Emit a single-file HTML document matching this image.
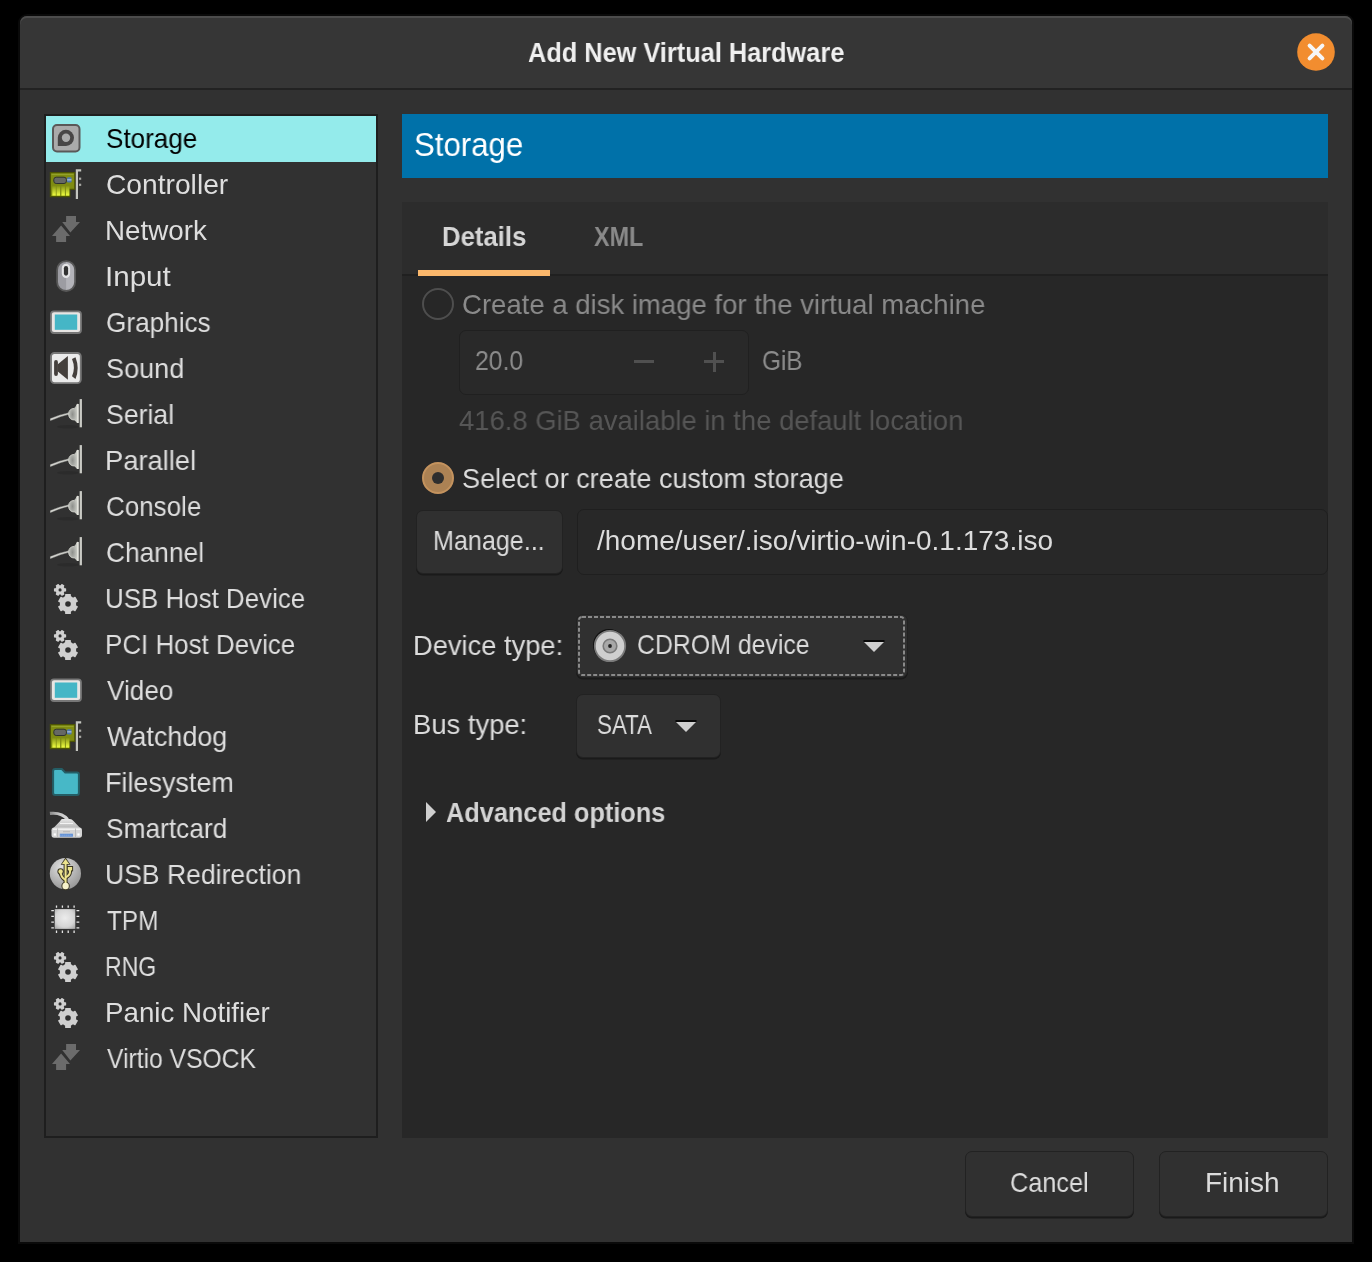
<!DOCTYPE html>
<html><head><meta charset="utf-8">
<style>
*{box-sizing:border-box;margin:0;padding:0}
html,body{width:1372px;height:1262px;background:#000;overflow:hidden}
body{position:relative;font-family:"Liberation Sans",sans-serif;font-size:27.6px;color:#dcdcdc}
.a{position:absolute}
.t{position:absolute;white-space:pre;line-height:1;transform-origin:0 0;will-change:transform}
.btn{position:absolute;background:#303030;border:1.5px solid #222;border-radius:7px;box-shadow:0 1.5px 0 #1a1a1a}
.ent{position:absolute;background:#282828;border:1.5px solid #1f1f1f;border-radius:7px}
</style></head><body>
<div class="a" style="left:18px;top:14px;width:1336px;height:1230px;background:#0a0a0a;border-radius:9px 9px 0 0"></div>
<div class="a" style="left:20px;top:16px;width:1332px;height:72px;background:#363636;border-radius:7px 7px 0 0;box-shadow:inset 0 2px 0 #4c4c4c"></div>
<div class="a" style="left:20px;top:88px;width:1332px;height:2px;background:#222"></div>
<div class="a" style="left:20px;top:90px;width:1332px;height:1152px;background:#313131"></div>

<div class="t" style="left:528.00px;top:39.43px;font-size:27.6px;font-weight:bold;color:#f0f0f0;transform:scaleX(0.9182)">Add New Virtual Hardware</div>
<svg class="a" style="left:1296px;top:32px" width="40" height="40" viewBox="0 0 40 40"><circle cx="20" cy="20" r="18.8" fill="#f28d2f"/><path d="M13.6 13.6 L26.4 26.4 M26.4 13.6 L13.6 26.4" stroke="#f6f6f6" stroke-width="4" stroke-linecap="round"/></svg>
<div class="a" style="left:44px;top:114px;width:334px;height:1024px;border:2px solid #1e1e1e;background:#313131"></div>
<div class="a" style="left:46px;top:116px;width:330px;height:46px;background:#94ebeb"></div>
<svg class="a" style="left:48px;top:116px" width="36" height="46" viewBox="0 0 36 46"><rect x="5" y="9" width="26.5" height="26.5" rx="4" fill="#aaa" stroke="#5a5858" stroke-width="2"/>
<path d="M9.8 30 L9.8 21.8 A8.1 8.1 0 1 1 18 30 Z" fill="#484646"/>
<circle cx="18" cy="21.8" r="4.2" fill="#aaa"/></svg>
<div class="t" style="left:106.06px;top:124.53px;font-size:27.6px;color:#000;transform:scaleX(0.9444)">Storage</div>
<svg class="a" style="left:48px;top:162px" width="36" height="46" viewBox="0 0 36 46"><defs><linearGradient id="fg" x1="0" y1="0" x2="0" y2="1"><stop offset="0" stop-color="#8a9818"/><stop offset="1" stop-color="#f0ff40"/></linearGradient></defs>
<path d="M2.4 10.6 H26.8 V27.4 H21.8 V34.6 H2.4 Z" fill="#7f8c12" stroke="#4c5404" stroke-width="1.2"/>
<path d="M3.6 11.8 H25.6 V13 H3.6Z" fill="#98a830" opacity="0.8"/>
<rect x="4.3" y="24.2" width="3.5" height="9.4" fill="url(#fg)"/><rect x="8.6" y="24.2" width="3.5" height="9.4" fill="url(#fg)"/><rect x="13.4" y="24.2" width="3.5" height="9.4" fill="url(#fg)"/><rect x="17.9" y="24.2" width="3.5" height="9.4" fill="url(#fg)"/>
<rect x="5.8" y="15.2" width="12.6" height="6.3" rx="2.4" fill="#666864" stroke="#2e3230" stroke-width="1"/>
<rect x="19" y="15.2" width="4.6" height="5.2" rx="1.2" fill="#4f79b0"/><path d="M19.2 17.9 H23.5" stroke="#d8e0ea" stroke-width="0.9"/>
<path d="M28.9 36.9 V8.3 H33.2" stroke="#c4c6c0" stroke-width="2.2" fill="none"/>
<rect x="31" y="15.6" width="2.2" height="2.2" fill="#a8a8a4"/><rect x="31" y="21.7" width="2.2" height="2.2" fill="#a8a8a4"/></svg>
<div class="t" style="left:105.98px;top:170.53px;font-size:27.6px;color:#dedede;transform:scaleX(1.0217)">Controller</div>
<svg class="a" style="left:48px;top:208px" width="36" height="46" viewBox="0 0 36 46"><path d="M18.1 8 H28 V14.1 H32 L22.4 24.6 L14.2 14.1 H18.1 Z" fill="#6b6b6b"/>
<path d="M13.1 17.4 L22 28 H18.1 V34.1 H8.1 V28 H4 Z" fill="#6b6b6b"/></svg>
<div class="t" style="left:104.99px;top:216.53px;font-size:27.6px;color:#dedede;transform:scaleX(1.0060)">Network</div>
<svg class="a" style="left:48px;top:254px" width="36" height="46" viewBox="0 0 36 46"><rect x="9.1" y="7.1" width="18" height="29.9" rx="9" fill="#b3b3b9"/>
<path d="M18.1 7.1 V37 A9 9 0 0 1 9.1 28 V16.1 A9 9 0 0 1 18.1 7.1Z" fill="#9c9ca2"/>
<rect x="9.1" y="7.1" width="18" height="29.9" rx="9" fill="none" stroke="#585858" stroke-width="1.8"/>
<rect x="13.8" y="9.8" width="8.3" height="14.2" rx="4.15" fill="#e4e4e6"/>
<rect x="15.9" y="12.1" width="4.2" height="9.6" rx="2.1" fill="#323232"/></svg>
<div class="t" style="left:104.86px;top:262.53px;font-size:27.6px;color:#dedede;transform:scaleX(1.0719)">Input</div>
<svg class="a" style="left:48px;top:300px" width="36" height="46" viewBox="0 0 36 46"><rect x="3" y="11.3" width="30" height="21.7" rx="3" fill="#e8e6e4" stroke="#777" stroke-width="1.8"/>
<rect x="6.8" y="14.5" width="22.4" height="15.3" fill="#45b6c6"/></svg>
<div class="t" style="left:106.05px;top:308.53px;font-size:27.6px;color:#dedede;transform:scaleX(0.9483)">Graphics</div>
<svg class="a" style="left:48px;top:346px" width="36" height="46" viewBox="0 0 36 46"><rect x="3" y="7" width="29.8" height="30.1" rx="3.5" fill="#ebebeb" stroke="#777" stroke-width="1.9"/>
<rect x="6.1" y="14" width="3.8" height="15.9" rx="1.9" fill="#443f3c"/>
<path d="M9.5 18.4 L19.9 9.9 V33.7 L9.5 25.3Z" fill="#443f3c"/>
<path d="M24 13.1 Q27.8 22.3 24 30.2 L27.5 32.9 Q31.9 22.3 27.5 11.2 Z" fill="#443f3c"/></svg>
<div class="t" style="left:106.02px;top:354.53px;font-size:27.6px;color:#dedede;transform:scaleX(0.9814)">Sound</div>
<svg class="a" style="left:48px;top:392px" width="36" height="46" viewBox="0 0 36 46"><defs><radialGradient id="bg" cx="0.45" cy="0.55" r="0.6"><stop offset="0" stop-color="#8e908c"/><stop offset="1" stop-color="#d0d2cc"/></radialGradient></defs>
<ellipse cx="20" cy="34.8" rx="11" ry="1.8" fill="#000" opacity="0.12"/>
<path d="M2 26.4 Q12 22.5 20.8 20.6 L21 22.4 Q12 24.5 2.1 29 Z" fill="#d2d3ce" stroke="#3a3a3a" stroke-width="0.4"/>
<path d="M20.5 22 Q21 16.4 26.5 16.4 Q28 15 29.4 11.9 V30.9 Q28 28.6 26.5 28 Q21 28 20.5 22Z" fill="url(#bg)" stroke="#cfd0ca" stroke-width="0.9"/>
<path d="M29.9 11.9 V30.9" stroke="#e2e3dc" stroke-width="1.8"/>
<path d="M32.8 7.1 V35.3" stroke="#c9cac4" stroke-width="2.3"/></svg>
<div class="t" style="left:106.04px;top:400.53px;font-size:27.6px;color:#dedede;transform:scaleX(0.9647)">Serial</div>
<svg class="a" style="left:48px;top:438px" width="36" height="46" viewBox="0 0 36 46"><defs><radialGradient id="bg" cx="0.45" cy="0.55" r="0.6"><stop offset="0" stop-color="#8e908c"/><stop offset="1" stop-color="#d0d2cc"/></radialGradient></defs>
<ellipse cx="20" cy="34.8" rx="11" ry="1.8" fill="#000" opacity="0.12"/>
<path d="M2 26.4 Q12 22.5 20.8 20.6 L21 22.4 Q12 24.5 2.1 29 Z" fill="#d2d3ce" stroke="#3a3a3a" stroke-width="0.4"/>
<path d="M20.5 22 Q21 16.4 26.5 16.4 Q28 15 29.4 11.9 V30.9 Q28 28.6 26.5 28 Q21 28 20.5 22Z" fill="url(#bg)" stroke="#cfd0ca" stroke-width="0.9"/>
<path d="M29.9 11.9 V30.9" stroke="#e2e3dc" stroke-width="1.8"/>
<path d="M32.8 7.1 V35.3" stroke="#c9cac4" stroke-width="2.3"/></svg>
<div class="t" style="left:105.02px;top:446.53px;font-size:27.6px;color:#dedede;transform:scaleX(0.9899)">Parallel</div>
<svg class="a" style="left:48px;top:484px" width="36" height="46" viewBox="0 0 36 46"><defs><radialGradient id="bg" cx="0.45" cy="0.55" r="0.6"><stop offset="0" stop-color="#8e908c"/><stop offset="1" stop-color="#d0d2cc"/></radialGradient></defs>
<ellipse cx="20" cy="34.8" rx="11" ry="1.8" fill="#000" opacity="0.12"/>
<path d="M2 26.4 Q12 22.5 20.8 20.6 L21 22.4 Q12 24.5 2.1 29 Z" fill="#d2d3ce" stroke="#3a3a3a" stroke-width="0.4"/>
<path d="M20.5 22 Q21 16.4 26.5 16.4 Q28 15 29.4 11.9 V30.9 Q28 28.6 26.5 28 Q21 28 20.5 22Z" fill="url(#bg)" stroke="#cfd0ca" stroke-width="0.9"/>
<path d="M29.9 11.9 V30.9" stroke="#e2e3dc" stroke-width="1.8"/>
<path d="M32.8 7.1 V35.3" stroke="#c9cac4" stroke-width="2.3"/></svg>
<div class="t" style="left:106.06px;top:492.53px;font-size:27.6px;color:#dedede;transform:scaleX(0.9410)">Console</div>
<svg class="a" style="left:48px;top:530px" width="36" height="46" viewBox="0 0 36 46"><defs><radialGradient id="bg" cx="0.45" cy="0.55" r="0.6"><stop offset="0" stop-color="#8e908c"/><stop offset="1" stop-color="#d0d2cc"/></radialGradient></defs>
<ellipse cx="20" cy="34.8" rx="11" ry="1.8" fill="#000" opacity="0.12"/>
<path d="M2 26.4 Q12 22.5 20.8 20.6 L21 22.4 Q12 24.5 2.1 29 Z" fill="#d2d3ce" stroke="#3a3a3a" stroke-width="0.4"/>
<path d="M20.5 22 Q21 16.4 26.5 16.4 Q28 15 29.4 11.9 V30.9 Q28 28.6 26.5 28 Q21 28 20.5 22Z" fill="url(#bg)" stroke="#cfd0ca" stroke-width="0.9"/>
<path d="M29.9 11.9 V30.9" stroke="#e2e3dc" stroke-width="1.8"/>
<path d="M32.8 7.1 V35.3" stroke="#c9cac4" stroke-width="2.3"/></svg>
<div class="t" style="left:106.05px;top:538.53px;font-size:27.6px;color:#dedede;transform:scaleX(0.9537)">Channel</div>
<svg class="a" style="left:48px;top:576px" width="36" height="46" viewBox="0 0 36 46"><g transform="translate(12.05 13.9)"><circle r="4.7" fill="#d0d0d0"/><rect x="-1.7" y="-6.1" width="3.4" height="6.1" rx="0.6" fill="#d0d0d0" transform="rotate(90.0)"/><rect x="-1.7" y="-6.1" width="3.4" height="6.1" rx="0.6" fill="#d0d0d0" transform="rotate(150.0)"/><rect x="-1.7" y="-6.1" width="3.4" height="6.1" rx="0.6" fill="#d0d0d0" transform="rotate(210.0)"/><rect x="-1.7" y="-6.1" width="3.4" height="6.1" rx="0.6" fill="#d0d0d0" transform="rotate(270.0)"/><rect x="-1.7" y="-6.1" width="3.4" height="6.1" rx="0.6" fill="#d0d0d0" transform="rotate(330.0)"/><rect x="-1.7" y="-6.1" width="3.4" height="6.1" rx="0.6" fill="#d0d0d0" transform="rotate(390.0)"/><circle r="1.55" fill="#303030"/></g><g transform="translate(20 28)"><circle r="8.2" fill="#d0d0d0"/><rect x="-2.9" y="-10" width="5.8" height="10" rx="0.6" fill="#d0d0d0" transform="rotate(0.0)"/><rect x="-2.9" y="-10" width="5.8" height="10" rx="0.6" fill="#d0d0d0" transform="rotate(60.0)"/><rect x="-2.9" y="-10" width="5.8" height="10" rx="0.6" fill="#d0d0d0" transform="rotate(120.0)"/><rect x="-2.9" y="-10" width="5.8" height="10" rx="0.6" fill="#d0d0d0" transform="rotate(180.0)"/><rect x="-2.9" y="-10" width="5.8" height="10" rx="0.6" fill="#d0d0d0" transform="rotate(240.0)"/><rect x="-2.9" y="-10" width="5.8" height="10" rx="0.6" fill="#d0d0d0" transform="rotate(300.0)"/><circle r="2.8" fill="#303030"/></g></svg>
<div class="t" style="left:105.12px;top:584.53px;font-size:27.6px;color:#dedede;transform:scaleX(0.9393)">USB Host Device</div>
<svg class="a" style="left:48px;top:622px" width="36" height="46" viewBox="0 0 36 46"><g transform="translate(12.05 13.9)"><circle r="4.7" fill="#d0d0d0"/><rect x="-1.7" y="-6.1" width="3.4" height="6.1" rx="0.6" fill="#d0d0d0" transform="rotate(90.0)"/><rect x="-1.7" y="-6.1" width="3.4" height="6.1" rx="0.6" fill="#d0d0d0" transform="rotate(150.0)"/><rect x="-1.7" y="-6.1" width="3.4" height="6.1" rx="0.6" fill="#d0d0d0" transform="rotate(210.0)"/><rect x="-1.7" y="-6.1" width="3.4" height="6.1" rx="0.6" fill="#d0d0d0" transform="rotate(270.0)"/><rect x="-1.7" y="-6.1" width="3.4" height="6.1" rx="0.6" fill="#d0d0d0" transform="rotate(330.0)"/><rect x="-1.7" y="-6.1" width="3.4" height="6.1" rx="0.6" fill="#d0d0d0" transform="rotate(390.0)"/><circle r="1.55" fill="#303030"/></g><g transform="translate(20 28)"><circle r="8.2" fill="#d0d0d0"/><rect x="-2.9" y="-10" width="5.8" height="10" rx="0.6" fill="#d0d0d0" transform="rotate(0.0)"/><rect x="-2.9" y="-10" width="5.8" height="10" rx="0.6" fill="#d0d0d0" transform="rotate(60.0)"/><rect x="-2.9" y="-10" width="5.8" height="10" rx="0.6" fill="#d0d0d0" transform="rotate(120.0)"/><rect x="-2.9" y="-10" width="5.8" height="10" rx="0.6" fill="#d0d0d0" transform="rotate(180.0)"/><rect x="-2.9" y="-10" width="5.8" height="10" rx="0.6" fill="#d0d0d0" transform="rotate(240.0)"/><rect x="-2.9" y="-10" width="5.8" height="10" rx="0.6" fill="#d0d0d0" transform="rotate(300.0)"/><circle r="2.8" fill="#303030"/></g></svg>
<div class="t" style="left:105.12px;top:630.53px;font-size:27.6px;color:#dedede;transform:scaleX(0.9397)">PCI Host Device</div>
<svg class="a" style="left:48px;top:668px" width="36" height="46" viewBox="0 0 36 46"><rect x="3" y="11.3" width="30" height="21.7" rx="3" fill="#e8e6e4" stroke="#777" stroke-width="1.8"/>
<rect x="6.8" y="14.5" width="22.4" height="15.3" fill="#45b6c6"/></svg>
<div class="t" style="left:107.00px;top:676.53px;font-size:27.6px;color:#dedede;transform:scaleX(0.9465)">Video</div>
<svg class="a" style="left:48px;top:714px" width="36" height="46" viewBox="0 0 36 46"><defs><linearGradient id="fg" x1="0" y1="0" x2="0" y2="1"><stop offset="0" stop-color="#8a9818"/><stop offset="1" stop-color="#f0ff40"/></linearGradient></defs>
<path d="M2.4 10.6 H26.8 V27.4 H21.8 V34.6 H2.4 Z" fill="#7f8c12" stroke="#4c5404" stroke-width="1.2"/>
<path d="M3.6 11.8 H25.6 V13 H3.6Z" fill="#98a830" opacity="0.8"/>
<rect x="4.3" y="24.2" width="3.5" height="9.4" fill="url(#fg)"/><rect x="8.6" y="24.2" width="3.5" height="9.4" fill="url(#fg)"/><rect x="13.4" y="24.2" width="3.5" height="9.4" fill="url(#fg)"/><rect x="17.9" y="24.2" width="3.5" height="9.4" fill="url(#fg)"/>
<rect x="5.8" y="15.2" width="12.6" height="6.3" rx="2.4" fill="#666864" stroke="#2e3230" stroke-width="1"/>
<rect x="19" y="15.2" width="4.6" height="5.2" rx="1.2" fill="#4f79b0"/><path d="M19.2 17.9 H23.5" stroke="#d8e0ea" stroke-width="0.9"/>
<path d="M28.9 36.9 V8.3 H33.2" stroke="#c4c6c0" stroke-width="2.2" fill="none"/>
<rect x="31" y="15.6" width="2.2" height="2.2" fill="#a8a8a4"/><rect x="31" y="21.7" width="2.2" height="2.2" fill="#a8a8a4"/></svg>
<div class="t" style="left:107.00px;top:722.53px;font-size:27.6px;color:#dedede;transform:scaleX(0.9765)">Watchdog</div>
<svg class="a" style="left:48px;top:760px" width="36" height="46" viewBox="0 0 36 46"><path d="M5.1 11.1 Q5.1 9.1 7.1 9.1 H13.8 L17.2 12.4 H28.9 Q30.9 12.4 30.9 14.4 V32.9 Q30.9 34.9 28.9 34.9 H7.1 Q5.1 34.9 5.1 32.9 Z" fill="#47b8c7" stroke="#245e66" stroke-width="2"/></svg>
<div class="t" style="left:105.04px;top:768.53px;font-size:27.6px;color:#dedede;transform:scaleX(0.9778)">Filesystem</div>
<svg class="a" style="left:48px;top:806px" width="36" height="46" viewBox="0 0 36 46"><defs><linearGradient id="scg" x1="0" y1="0" x2="0" y2="1"><stop offset="0" stop-color="#e6e6e6"/><stop offset="1" stop-color="#b4b4b4"/></linearGradient>
<linearGradient id="scc" x1="0" y1="0" x2="1" y2="0"><stop offset="0" stop-color="#8a8a8a"/><stop offset="0.5" stop-color="#c4c4c4"/><stop offset="1" stop-color="#d8d8d8"/></linearGradient></defs>
<path d="M1.9 7.4 Q14 6.2 19.6 13.5" stroke="url(#scc)" stroke-width="3.2" fill="none"/>
<path d="M14.2 13 H21.8 Q24 13 25.5 15 L32.6 22.6 H5 L12.2 15 Q13 13 14.2 13Z" fill="url(#scg)"/>
<path d="M12 17.5 H25" stroke="#f2f2f2" stroke-width="1"/>
<rect x="3.5" y="21.6" width="30.5" height="10.1" rx="2.6" fill="#d6d6d6"/>
<path d="M5 23.2 H32.5" stroke="#f6f6f6" stroke-width="1.3"/>
<path d="M15 25.6 H22" stroke="#bdbdbd" stroke-width="1.4"/>
<rect x="11.8" y="27.7" width="13.1" height="3" fill="#5e8ed4"/>
<path d="M12.4 29.2 H24.4" stroke="#b0cbf0" stroke-width="0.8" stroke-dasharray="1 1"/>
<rect x="5.7" y="27.4" width="2.2" height="2.2" fill="#fff"/><rect x="29.4" y="27.4" width="2.2" height="2.2" fill="#fff"/>
<path d="M9.6 22.5 V31 M27.5 22.5 V31" stroke="#b0b0b0" stroke-width="0.8"/></svg>
<div class="t" style="left:106.05px;top:814.53px;font-size:27.6px;color:#dedede;transform:scaleX(0.9526)">Smartcard</div>
<svg class="a" style="left:48px;top:852px" width="36" height="46" viewBox="0 0 36 46"><defs><radialGradient id="ug" cx="0.4" cy="0.3" r="0.85"><stop offset="0" stop-color="#e2e2e2"/><stop offset="0.7" stop-color="#a4a4a4"/><stop offset="1" stop-color="#8a8a8a"/></radialGradient></defs>
<circle cx="17.4" cy="21.6" r="15.6" fill="url(#ug)"/>
<g stroke="#3a3622" stroke-width="4" fill="none" stroke-linejoin="round"><path d="M17.6 11 V32"/><path d="M22 17 V20 Q22 23 17.6 25.5"/><path d="M12.6 19.4 Q12.6 25 17.6 28"/></g>
<g fill="#3a3622"><circle cx="12.6" cy="19.4" r="3.2"/><rect x="18.8" y="14" width="6.3" height="5.4"/><path d="M17.6 5.6 L22.6 12.8 H12.6Z"/><circle cx="17.6" cy="34" r="4.2"/></g>
<g stroke="#ece48e" stroke-width="2" fill="none"><path d="M17.6 11 V32"/><path d="M22 17 V20 Q22 23 17.6 25.5"/><path d="M12.6 19.4 Q12.6 25 17.6 28"/></g>
<g fill="#ece48e"><circle cx="12.6" cy="19.4" r="2.2"/><rect x="19.8" y="15" width="4.3" height="3.4"/><path d="M17.6 7 L21.2 12 H14Z"/><circle cx="17.6" cy="34" r="3.2" fill="#f6f2cc"/></g></svg>
<div class="t" style="left:105.08px;top:860.53px;font-size:27.6px;color:#dedede;transform:scaleX(0.9620)">USB Redirection</div>
<svg class="a" style="left:48px;top:898px" width="36" height="46" viewBox="0 0 36 46"><defs><radialGradient id="cg" cx="0.5" cy="0.45" r="0.75"><stop offset="0" stop-color="#ececec"/><stop offset="0.6" stop-color="#d6d6d6"/><stop offset="1" stop-color="#a0a0a0"/></radialGradient></defs>
<rect x="6.7" y="11.1" width="20.6" height="19.8" fill="url(#cg)"/>
<path d="M8.5 7.4v2.4M14.4 7.4v2.4M20.2 7.4v2.4M26.1 7.4v2.4M8.5 32.4v2.5M14.4 32.4v2.5M20.2 32.4v2.5M26.1 32.4v2.5M3.3 12.7h2.6M3.3 18.4h2.6M3.3 24.2h2.6M3.3 29.9h2.6M28.5 12.7h2.8M28.5 18.4h2.8M28.5 24.2h2.8M28.5 29.9h2.8" stroke="#e6e6e6" stroke-width="1.3"/></svg>
<div class="t" style="left:107.00px;top:906.53px;font-size:27.6px;color:#dedede;transform:scaleX(0.8834)">TPM</div>
<svg class="a" style="left:48px;top:944px" width="36" height="46" viewBox="0 0 36 46"><g transform="translate(12.05 13.9)"><circle r="4.7" fill="#d0d0d0"/><rect x="-1.7" y="-6.1" width="3.4" height="6.1" rx="0.6" fill="#d0d0d0" transform="rotate(90.0)"/><rect x="-1.7" y="-6.1" width="3.4" height="6.1" rx="0.6" fill="#d0d0d0" transform="rotate(150.0)"/><rect x="-1.7" y="-6.1" width="3.4" height="6.1" rx="0.6" fill="#d0d0d0" transform="rotate(210.0)"/><rect x="-1.7" y="-6.1" width="3.4" height="6.1" rx="0.6" fill="#d0d0d0" transform="rotate(270.0)"/><rect x="-1.7" y="-6.1" width="3.4" height="6.1" rx="0.6" fill="#d0d0d0" transform="rotate(330.0)"/><rect x="-1.7" y="-6.1" width="3.4" height="6.1" rx="0.6" fill="#d0d0d0" transform="rotate(390.0)"/><circle r="1.55" fill="#303030"/></g><g transform="translate(20 28)"><circle r="8.2" fill="#d0d0d0"/><rect x="-2.9" y="-10" width="5.8" height="10" rx="0.6" fill="#d0d0d0" transform="rotate(0.0)"/><rect x="-2.9" y="-10" width="5.8" height="10" rx="0.6" fill="#d0d0d0" transform="rotate(60.0)"/><rect x="-2.9" y="-10" width="5.8" height="10" rx="0.6" fill="#d0d0d0" transform="rotate(120.0)"/><rect x="-2.9" y="-10" width="5.8" height="10" rx="0.6" fill="#d0d0d0" transform="rotate(180.0)"/><rect x="-2.9" y="-10" width="5.8" height="10" rx="0.6" fill="#d0d0d0" transform="rotate(240.0)"/><rect x="-2.9" y="-10" width="5.8" height="10" rx="0.6" fill="#d0d0d0" transform="rotate(300.0)"/><circle r="2.8" fill="#303030"/></g></svg>
<div class="t" style="left:105.33px;top:952.53px;font-size:27.6px;color:#dedede;transform:scaleX(0.8366)">RNG</div>
<svg class="a" style="left:48px;top:990px" width="36" height="46" viewBox="0 0 36 46"><g transform="translate(12.05 13.9)"><circle r="4.7" fill="#d0d0d0"/><rect x="-1.7" y="-6.1" width="3.4" height="6.1" rx="0.6" fill="#d0d0d0" transform="rotate(90.0)"/><rect x="-1.7" y="-6.1" width="3.4" height="6.1" rx="0.6" fill="#d0d0d0" transform="rotate(150.0)"/><rect x="-1.7" y="-6.1" width="3.4" height="6.1" rx="0.6" fill="#d0d0d0" transform="rotate(210.0)"/><rect x="-1.7" y="-6.1" width="3.4" height="6.1" rx="0.6" fill="#d0d0d0" transform="rotate(270.0)"/><rect x="-1.7" y="-6.1" width="3.4" height="6.1" rx="0.6" fill="#d0d0d0" transform="rotate(330.0)"/><rect x="-1.7" y="-6.1" width="3.4" height="6.1" rx="0.6" fill="#d0d0d0" transform="rotate(390.0)"/><circle r="1.55" fill="#303030"/></g><g transform="translate(20 28)"><circle r="8.2" fill="#d0d0d0"/><rect x="-2.9" y="-10" width="5.8" height="10" rx="0.6" fill="#d0d0d0" transform="rotate(0.0)"/><rect x="-2.9" y="-10" width="5.8" height="10" rx="0.6" fill="#d0d0d0" transform="rotate(60.0)"/><rect x="-2.9" y="-10" width="5.8" height="10" rx="0.6" fill="#d0d0d0" transform="rotate(120.0)"/><rect x="-2.9" y="-10" width="5.8" height="10" rx="0.6" fill="#d0d0d0" transform="rotate(180.0)"/><rect x="-2.9" y="-10" width="5.8" height="10" rx="0.6" fill="#d0d0d0" transform="rotate(240.0)"/><rect x="-2.9" y="-10" width="5.8" height="10" rx="0.6" fill="#d0d0d0" transform="rotate(300.0)"/><circle r="2.8" fill="#303030"/></g></svg>
<div class="t" style="left:104.99px;top:998.53px;font-size:27.6px;color:#dedede;transform:scaleX(1.0043)">Panic Notifier</div>
<svg class="a" style="left:48px;top:1036px" width="36" height="46" viewBox="0 0 36 46"><path d="M18.1 8 H28 V14.1 H32 L22.4 24.6 L14.2 14.1 H18.1 Z" fill="#6b6b6b"/>
<path d="M13.1 17.4 L22 28 H18.1 V34.1 H8.1 V28 H4 Z" fill="#6b6b6b"/></svg>
<div class="t" style="left:107.00px;top:1044.53px;font-size:27.6px;color:#dedede;transform:scaleX(0.8939)">Virtio VSOCK</div>
<div class="a" style="left:402px;top:114px;width:926px;height:64px;background:#0071a9"></div>
<div class="a" style="left:402px;top:202px;width:926px;height:936px;background:#272727"></div>
<div class="a" style="left:402px;top:202px;width:926px;height:72px;background:#2c2c2c"></div>
<div class="a" style="left:402px;top:274px;width:926px;height:2px;background:#202020"></div>
<div class="a" style="left:418px;top:270px;width:132px;height:6px;background:#fbb86c"></div>
<div class="a" style="left:422px;top:288px;width:32px;height:32px;border-radius:50%;border:2px solid #4e4e4e"></div>
<div class="ent" style="left:459px;top:330px;width:290px;height:65px;background:#292929;border-color:#202020"></div>
<div class="a" style="left:634px;top:360px;width:20px;height:3px;background:#505050"></div>
<div class="a" style="left:704px;top:360px;width:20px;height:3px;background:#505050"></div>
<div class="a" style="left:712.5px;top:351.5px;width:3px;height:20px;background:#505050"></div>
<div class="a" style="left:422px;top:462px;width:32px;height:32px;border-radius:50%;background:#ac8254;border:2px solid #c4935e"></div>
<div class="a" style="left:432px;top:472px;width:12px;height:12px;border-radius:50%;background:#2e2e2e"></div>
<div class="btn" style="left:415.5px;top:509.5px;width:147px;height:64.5px"></div>
<div class="ent" style="left:576.5px;top:509px;width:751.5px;height:66px"></div>
<div class="btn" style="left:575.5px;top:613.5px;width:332px;height:64.5px"></div>
<svg class="a" style="left:576px;top:614px" width="331" height="64" viewBox="0 0 331 64"><rect x="3" y="3" width="325" height="58" rx="3" fill="none" stroke="#8a8a8a" stroke-width="2" stroke-dasharray="4 2"/></svg>
<svg class="a" style="left:592px;top:628px" width="36" height="36" viewBox="0 0 36 36"><circle cx="17" cy="17" r="16" fill="#111"/><circle cx="18" cy="18" r="15.2" fill="#cfcfcf" stroke="#7a7a7a" stroke-width="1.8"/><circle cx="18" cy="18" r="6.8" fill="#a8a8a8" stroke="#7a7a7a" stroke-width="1.6"/><circle cx="18" cy="18" r="1.9" fill="#222"/></svg>
<svg class="a" style="left:862px;top:638px" width="24" height="16" viewBox="0 0 24 16"><path d="M2 4 H22 L12 14 Z" fill="#cfcfcf"/><path d="M1.5 3 H22.5" stroke="#080808" stroke-width="2"/></svg>
<div class="btn" style="left:575.5px;top:693.5px;width:145px;height:64.5px"></div>
<svg class="a" style="left:674px;top:718px" width="24" height="16" viewBox="0 0 24 16"><path d="M2 4 H22 L12 14 Z" fill="#cfcfcf"/><path d="M1.5 3 H22.5" stroke="#080808" stroke-width="2"/></svg>
<svg class="a" style="left:424px;top:800px" width="16" height="24" viewBox="0 0 16 24"><path d="M2 2 L12 12 L2 22Z" fill="#cfcfcf"/></svg>
<div class="btn" style="left:964.5px;top:1150.5px;width:169px;height:66px"></div>
<div class="btn" style="left:1158.5px;top:1150.5px;width:169px;height:66px"></div>
<div class="t" style="left:414.06px;top:127.76px;font-size:33px;color:#ffffff;transform:scaleX(0.9450)">Storage</div>
<div class="t" style="left:442.37px;top:223.13px;font-size:27.6px;font-weight:bold;color:#d6d6d6;transform:scaleX(0.9311)">Details</div>
<div class="t" style="left:594.20px;top:223.13px;font-size:27.6px;font-weight:bold;color:#8a8a8a;transform:scaleX(0.8451)">XML</div>
<div class="t" style="left:462.40px;top:291.03px;font-size:27.6px;color:#8a8a8a;transform:scaleX(0.9977)">Create a disk image for the virtual machine</div>
<div class="t" style="left:475.10px;top:347.23px;font-size:27.6px;color:#8c8c8c;transform:scaleX(0.8976)">20.0</div>
<div class="t" style="left:761.82px;top:346.83px;font-size:27.6px;color:#8c8c8c;transform:scaleX(0.8809)">GiB</div>
<div class="t" style="left:459.00px;top:406.83px;font-size:27.6px;color:#565656;transform:scaleX(0.9933)">416.8 GiB available in the default location</div>
<div class="t" style="left:461.52px;top:464.53px;font-size:27.6px;color:#dcdcdc;transform:scaleX(0.9801)">Select or create custom storage</div>
<div class="t" style="left:433.18px;top:527.43px;font-size:27.6px;color:#dcdcdc;transform:scaleX(0.9105)">Manage...</div>
<div class="t" style="left:596.80px;top:527.43px;font-size:27.6px;color:#dcdcdc;transform:scaleX(1.0147)">/home/user/.iso/virtio-win-0.1.173.iso</div>
<div class="t" style="left:413.32px;top:631.53px;font-size:27.6px;color:#dcdcdc;transform:scaleX(0.9888)">Device type:</div>
<div class="t" style="left:637.40px;top:631.23px;font-size:27.6px;color:#dcdcdc;transform:scaleX(0.9006)">CDROM device</div>
<div class="t" style="left:413.31px;top:711.03px;font-size:27.6px;color:#dcdcdc;transform:scaleX(0.9931)">Bus type:</div>
<div class="t" style="left:597.19px;top:711.23px;font-size:27.6px;color:#dcdcdc;transform:scaleX(0.8096)">SATA</div>
<div class="t" style="left:445.70px;top:799.23px;font-size:27.6px;font-weight:bold;color:#d4d4d4;transform:scaleX(0.9170)">Advanced options</div>
<div class="t" style="left:1009.88px;top:1169.03px;font-size:27.6px;color:#dcdcdc;transform:scaleX(0.9157)">Cancel</div>
<div class="t" style="left:1205.17px;top:1169.03px;font-size:27.6px;color:#dcdcdc;transform:scaleX(1.0134)">Finish</div>
</body></html>
